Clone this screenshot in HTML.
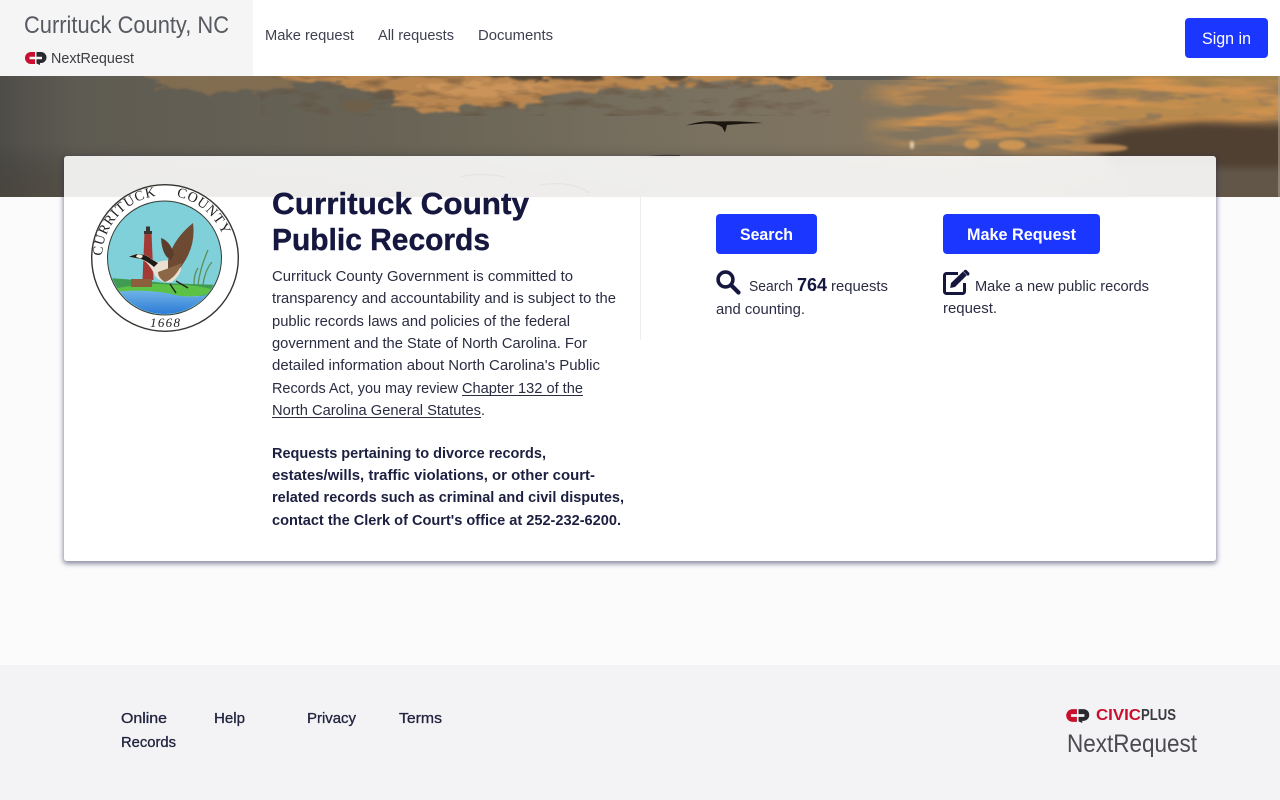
<!DOCTYPE html>
<html lang="en">
<head>
<meta charset="utf-8">
<title>Currituck County Public Records</title>
<style>
html,body{margin:0;padding:0;width:1280px;height:800px;overflow:hidden;background:#fbfbfc;font-family:"Liberation Sans",sans-serif}
.abs{position:absolute}
#brand{left:0;top:0;width:253px;height:76px;background:#f5f5f5}
#nav{left:253px;top:0;width:1027px;height:76px;background:#fff}
#hero{left:0;top:76px;width:1280px;height:121px;overflow:hidden}
#card{left:64px;top:156px;width:1152px;height:405px;border-radius:3px;background:linear-gradient(to bottom,rgba(255,255,255,.89) 0,rgba(255,255,255,.89) 41px,#fff 41px);box-shadow:0 2px 5px 1px rgba(40,40,80,.5)}
#divider{left:640px;top:197px;width:1px;height:143px;background:#eeeeef}
.btn{background:#1b36ff;border-radius:4px}
#footer{left:0;top:665px;width:1280px;height:135px;background:#f3f3f6}
svg{display:block}
#t{left:0;top:0;pointer-events:none}
#t text{font-family:"Liberation Sans",sans-serif;fill:#25273f}
#t .b{font-size:14.4px;fill:#2a2c42}
#t .s{font-size:14.4px;font-weight:bold;fill:#1d1f40}
#t .h{font-size:31px;font-weight:bold;fill:#15173f;stroke:#15173f;stroke-width:.4px}
#t .n{font-size:14.4px;fill:#3f4150}
#t .f{font-size:14.4px;fill:#22243f;stroke:#22243f;stroke-width:.3px}
#t .w{fill:#fff;font-size:16.5px}
</style>
</head>
<body>
<div class="abs" id="brand"></div>
<div class="abs" id="nav"></div>
<div class="abs" id="hero">
<svg width="1280" height="121" viewBox="0 76 1280 121">
<defs>
<linearGradient id="sky" x1="0" x2="1" y1="0" y2="0">
<stop offset="0" stop-color="#4f4d48"/><stop offset=".06" stop-color="#5e5b52"/><stop offset=".3" stop-color="#686355"/><stop offset=".55" stop-color="#7a7160"/><stop offset=".75" stop-color="#84765f"/><stop offset="1" stop-color="#6d5f4c"/>
</linearGradient>
<linearGradient id="fadeB" x1="0" x2="0" y1="0" y2="1"><stop offset=".55" stop-color="#000" stop-opacity="0"/><stop offset="1" stop-color="#3a3024" stop-opacity=".25"/></linearGradient>
<filter id="rough" x="-5%" y="-30%" width="110%" height="160%" color-interpolation-filters="sRGB">
<feTurbulence type="fractalNoise" baseFrequency=".035 .12" numOctaves="3" seed="4" result="n"/>
<feDisplacementMap in="SourceGraphic" in2="n" scale="22" xChannelSelector="R" yChannelSelector="G"/>
<feGaussianBlur stdDeviation="1.100"/>
</filter>
<filter id="b4" x="-20%" y="-80%" width="140%" height="260%"><feGaussianBlur stdDeviation="4"/></filter>
<filter id="b1" x="-20%" y="-50%" width="140%" height="200%"><feGaussianBlur stdDeviation="1.200"/></filter>
<filter id="mott" x="0" y="0" width="100%" height="100%" color-interpolation-filters="sRGB">
<feTurbulence type="fractalNoise" baseFrequency=".011 .085" numOctaves="4" seed="7"/>
<feColorMatrix type="matrix" values="0 0 0 0 .83  0 0 0 0 .58  0 0 0 0 .31  3.4 0 0 0 -1.35"/>
<feGaussianBlur stdDeviation=".7"/>
<feComposite in2="SourceAlpha" operator="in"/>
</filter>
<filter id="mottD" x="0" y="0" width="100%" height="100%" color-interpolation-filters="sRGB">
<feTurbulence type="fractalNoise" baseFrequency=".03 .1" numOctaves="3" seed="12"/>
<feColorMatrix type="matrix" values="0 0 0 0 .38  0 0 0 0 .3  0 0 0 0 .22  3 0 0 0 -1.5"/>
<feComposite in2="SourceAlpha" operator="in"/>
</filter>
<linearGradient id="mfade" x1="0" x2="1"><stop offset="0" stop-color="#fff" stop-opacity="0"/><stop offset=".14" stop-color="#fff"/></linearGradient>
<linearGradient id="mv" x1="0" x2="0" y1="0" y2="1"><stop offset=".6" stop-color="#fff"/><stop offset="1" stop-color="#000"/></linearGradient>
<mask id="mm" maskUnits="userSpaceOnUse" x="860" y="76" width="420" height="90"><rect x="860" y="76" width="420" height="90" fill="url(#mfade)"/></mask>
<mask id="mv2" maskUnits="userSpaceOnUse" x="860" y="76" width="420" height="90"><rect x="860" y="76" width="420" height="90" fill="url(#mv)"/></mask>
</defs>
<rect x="0" y="76" width="1280" height="121" fill="url(#sky)"/>
<rect x="0" y="76" width="1280" height="121" fill="url(#fadeB)"/>
<g filter="url(#rough)">
<path d="M135 70H290L300 82 262 90 210 94 150 86Z" fill="#8a7150" opacity=".8"/>
<path d="M270 70H640V84L600 90 560 94 520 104 470 108 420 112 390 96 340 84 285 78Z" fill="#b98650"/>
<path d="M640 70H825L830 90 790 86 740 80 690 82 640 90Z" fill="#bb8850"/>
<path d="M440 70H640V79H500ZM660 70H700L690 79H670ZM760 70H800L790 79H770Z" fill="#554838"/>
<path d="M420 84H560L540 92 470 98Z" fill="#c9935a"/>
</g>
<rect x="260" y="76" width="570" height="40" filter="url(#mottD)" fill="#000" opacity=".55"/>
<ellipse cx="357" cy="106" rx="16" ry="6" fill="#6e5f48" filter="url(#b1)"/>
<rect x="826" y="76" width="100" height="4" fill="#5c5a55"/>
<g filter="url(#rough)">
<path d="M855 96L960 88 1040 70H1285V150L1180 143 1090 150 1000 136 930 122 980 110 900 98Z" fill="#967a57"/>
<path d="M1000 70H1285V84L1100 90 1000 82Z" fill="#a3824f"/>
<path d="M970 118L1060 106 1200 98 1285 102V114L1150 120 1040 126Z" fill="#b88a4e"/>
</g>
<g mask="url(#mv2)"><g mask="url(#mm)"><rect x="860" y="76" width="420" height="90" filter="url(#mott)" fill="#000"/></g></g>
<g filter="url(#b4)">
<path d="M1085 140L1130 128 1200 122 1285 124V170L1200 172 1120 170Z" fill="#4f3f30"/>
<path d="M1110 168H1285V197H1120Z" fill="#625648"/>
</g>
<g filter="url(#b1)">
<ellipse cx="972" cy="144" rx="8" ry="5" fill="#cc9552"/>
<ellipse cx="1012" cy="145" rx="14" ry="5" fill="#cc9552"/>
<ellipse cx="1100" cy="148" rx="28" ry="4" fill="#b78550"/>
<ellipse cx="912" cy="145" rx="2" ry="4" fill="#e8d6b0"/>
</g>
<path d="M686 125.500Q702 120 718 121.500Q740 120.500 763 123Q742 123.500 727 125L725 132.500L722 127Q716 123 705 123.500Q695 124 686 125.500Z" fill="#1c1610"/>
<path d="M640 157Q660 154 680 155L680 158H640Z" fill="#2d2620" opacity=".7"/>
<rect x="1278" y="76" width="2" height="121" fill="#b5a999" opacity=".5"/>
</svg>
</div>
<div class="abs" id="card"></div>
<svg class="abs" style="left:450px;top:165px" width="200" height="32" viewBox="0 0 200 32"><path d="M10 12Q30 7 55 12M90 20Q120 15 140 28" fill="none" stroke="#e6e4e0" stroke-width="1.200"/></svg>
<div class="abs" id="divider"></div>
<div class="abs btn" style="left:1185px;top:18px;width:83px;height:40px"></div>
<div class="abs btn" style="left:716px;top:214px;width:101px;height:40px"></div>
<div class="abs btn" style="left:943px;top:214px;width:157px;height:40px"></div>
<div class="abs" id="footer"></div>

<!-- Seal -->
<svg class="abs" style="left:85px;top:178px" width="160" height="160" viewBox="85 178 160 160">
<defs>
<clipPath id="disc"><circle cx="164.500" cy="258" r="56"/></clipPath>
<path id="arcT" d="M102 258A62.500 62.500 0 0 1 227 258"/>
<linearGradient id="wat" x1="0" x2="0" y1="0" y2="1"><stop offset="0" stop-color="#6fb4e6"/><stop offset="1" stop-color="#2a78d6"/></linearGradient>
</defs>
<circle cx="165" cy="258" r="73.300" fill="#fff" stroke="#33332f" stroke-width="1.400"/>
<circle cx="164.500" cy="258" r="57" fill="#7ed0d8" stroke="#3a3a36" stroke-width="1"/>
<g clip-path="url(#disc)">
<rect x="108" y="200" width="114" height="116" fill="#7fd0d8"/>
<path d="M108 278Q140 280 165 283L222 285V296H108Z" fill="#3f9c52"/>
<path d="M118 288Q150 282 172 285 195 284 214 290 205 298 180 296 150 296 118 295Z" fill="#5cc245"/>
<path d="M112 292Q150 288 180 296 200 298 212 293 196 312 165 315 128 314 112 292Z" fill="url(#wat)"/>
<path d="M144.500 232L151.500 232 153.500 280H142.500Z" fill="#a43a36"/>
<path d="M144 231H152V234H144ZM146 226.500H150V231H146Z" fill="#3a3530"/>
<path d="M131 279H152V287H131Z" fill="#8c5f3c"/>
<path d="M198 285Q200 268 208 250M203 285Q205 270 212 262M194 284Q194 274 198 268" stroke="#5d8e5a" stroke-width="1.300" fill="none"/>
</g>
<path d="M129 256L137 254Q146 254 150 258 154 261 158 262 170 258 180 264 184 272 172 282 162 284 155 276 152 268 146 262 139 258 135 258Z" fill="#e9e0d2"/>
<path d="M129 256.500L137 254Q146 254 151 259L158 263 154 267Q146 260 139 258.500 135 258 129 256.500Z" fill="#1f1a16"/>
<path d="M137 254.500Q141 254 143 256L141 258.500 136 257Z" fill="#efe9dd"/>
<path d="M168 261Q172 240 193 223 196 245 183 264 177 274 168 270Z" fill="#6e4a33"/>
<path d="M171 260Q162 256 161 238 170 241 174 254Z" fill="#5b3d2b"/>
<path d="M158 272Q175 266 182 263 176 278 165 282 158 278 158 272Z" fill="#8b6747"/>
<path d="M176 281L188 288M170 284L176 293" stroke="#26231f" stroke-width="1.400" fill="none"/>
<text font-family="Liberation Serif,serif" font-size="14" fill="#222" letter-spacing=".8"><textPath href="#arcT" startOffset="2">CURRITUCK</textPath></text>
<text font-family="Liberation Serif,serif" font-size="14" fill="#222" letter-spacing=".8"><textPath href="#arcT" startOffset="110">COUNTY</textPath></text>
<text x="150" y="327" font-family="Liberation Serif,serif" font-size="13" font-style="italic" fill="#222" textLength="30">1668</text>
</svg>

<!-- Icons and logos -->
<svg class="abs" style="left:25px;top:51px" width="22" height="14" viewBox="0 0 22 14">
<path d="M10 1H6A6 6 0 0 0 6 13H10V8.300H4.500V5.700H10Z" fill="#c8102e"/>
<path d="M11.500 1H16A5.500 5.500 0 0 1 16 12H15V14L11.500 12.500V8.300H17V5.700H11.500Z" fill="#2a2a2e"/>
</svg>
<svg class="abs" style="left:1066px;top:708px" width="24" height="15" viewBox="0 0 22 14">
<path d="M10 1H6A6 6 0 0 0 6 13H10V8.300H4.500V5.700H10Z" fill="#c8102e"/>
<path d="M11.500 1H16A5.500 5.500 0 0 1 16 12H15V14L11.500 12.500V8.300H17V5.700H11.500Z" fill="#2a2a2e"/>
</svg>
<svg class="abs" style="left:716px;top:270px" width="25" height="25" viewBox="0 0 25 25">
<circle cx="9.500" cy="9.500" r="7.400" fill="none" stroke="#15173f" stroke-width="3.600"/>
<path d="M15 15L22.500 22.500" stroke="#15173f" stroke-width="4.200" stroke-linecap="round"/>
</svg>
<svg class="abs" style="left:943px;top:269px" width="28" height="26" viewBox="0 0 28 26">
<path d="M15 4.500H3.500A2 2 0 0 0 1.500 6.500V22.500A2 2 0 0 0 3.500 24.500H19.500A2 2 0 0 0 21.500 22.500V14" fill="none" stroke="#15173f" stroke-width="3"/>
<path d="M8 14L20 2.500 23.800 6.300 12 18 7.200 19Z" fill="#15173f"/>
<path d="M21.300 1.300Q22.500 .3 23.700 1.300L26 3.600Q27 4.800 26 6L25 7 20.300 2.300Z" fill="#15173f"/>
</svg>

<!-- Text -->
<svg class="abs" id="t" width="1280" height="800" viewBox="0 0 1280 800">
<text x="24" y="33" font-size="24" style="fill:#585a62" textLength="205" lengthAdjust="spacingAndGlyphs">Currituck County, NC</text>
<text x="51" y="63" font-size="15" style="fill:#3c3d43" textLength="83" lengthAdjust="spacingAndGlyphs">NextRequest</text>
<text class="n" x="265" y="40" textLength="89" lengthAdjust="spacingAndGlyphs">Make request</text>
<text class="n" x="378" y="40" textLength="76" lengthAdjust="spacingAndGlyphs">All requests</text>
<text class="n" x="478" y="40" textLength="75" lengthAdjust="spacingAndGlyphs">Documents</text>
<text class="w" x="1202" y="44" textLength="49" lengthAdjust="spacingAndGlyphs">Sign in</text>

<text class="h" x="272" y="214" textLength="257" lengthAdjust="spacingAndGlyphs">Currituck County</text>
<text class="h" x="272" y="250" textLength="218" lengthAdjust="spacingAndGlyphs">Public Records</text>

<text class="b" x="272" y="281" textLength="301" lengthAdjust="spacingAndGlyphs">Currituck County Government is committed to</text>
<text class="b" x="272" y="303" textLength="344" lengthAdjust="spacingAndGlyphs">transparency and accountability and is subject to the</text>
<text class="b" x="272" y="326" textLength="298" lengthAdjust="spacingAndGlyphs">public records laws and policies of the federal</text>
<text class="b" x="272" y="348" textLength="315" lengthAdjust="spacingAndGlyphs">government and the State of North Carolina. For</text>
<text class="b" x="272" y="370" textLength="328" lengthAdjust="spacingAndGlyphs">detailed information about North Carolina's Public</text>
<text class="b" x="272" y="393" textLength="186" lengthAdjust="spacingAndGlyphs">Records Act, you may review</text>
<text class="b" x="462" y="393" textLength="121" lengthAdjust="spacingAndGlyphs">Chapter 132 of the</text>
<rect x="462" y="395" width="121" height="1" fill="#2a2c42"/>
<text class="b" x="272" y="415" textLength="209" lengthAdjust="spacingAndGlyphs">North Carolina General Statutes</text>
<rect x="272" y="417" width="209" height="1" fill="#2a2c42"/>
<text class="b" x="481" y="415">.</text>

<text class="s" x="272" y="458" textLength="274" lengthAdjust="spacingAndGlyphs">Requests pertaining to divorce records,</text>
<text class="s" x="272" y="480" textLength="323" lengthAdjust="spacingAndGlyphs">estates/wills, traffic violations, or other court-</text>
<text class="s" x="272" y="502" textLength="352" lengthAdjust="spacingAndGlyphs">related records such as criminal and civil disputes,</text>
<text class="s" x="272" y="525" textLength="349" lengthAdjust="spacingAndGlyphs">contact the Clerk of Court's office at 252-232-6200.</text>

<text class="w" x="740" y="240" font-weight="bold" textLength="53" lengthAdjust="spacingAndGlyphs">Search</text>
<text class="w" x="967" y="240" font-weight="bold" textLength="109" lengthAdjust="spacingAndGlyphs">Make Request</text>

<text class="b" x="749" y="291" textLength="44" lengthAdjust="spacingAndGlyphs">Search</text>
<text x="797" y="291" font-size="18" font-weight="bold" style="fill:#15173f" textLength="30" lengthAdjust="spacingAndGlyphs">764</text>
<text class="b" x="831" y="291" textLength="57" lengthAdjust="spacingAndGlyphs">requests</text>
<text class="b" x="716" y="314" textLength="89" lengthAdjust="spacingAndGlyphs">and counting.</text>
<text class="b" x="975" y="291" textLength="174" lengthAdjust="spacingAndGlyphs">Make a new public records</text>
<text class="b" x="943" y="313" textLength="54" lengthAdjust="spacingAndGlyphs">request.</text>

<text class="f" x="121" y="723" textLength="46" lengthAdjust="spacingAndGlyphs">Online</text>
<text class="f" x="121" y="747" textLength="55" lengthAdjust="spacingAndGlyphs">Records</text>
<text class="f" x="214" y="723" textLength="31" lengthAdjust="spacingAndGlyphs">Help</text>
<text class="f" x="307" y="723" textLength="49" lengthAdjust="spacingAndGlyphs">Privacy</text>
<text class="f" x="399" y="723" textLength="43" lengthAdjust="spacingAndGlyphs">Terms</text>

<text x="1096" y="720" font-size="15.500" font-weight="bold" style="fill:#c8102e" textLength="45" lengthAdjust="spacingAndGlyphs">CIVIC</text>
<text x="1141" y="720" font-size="15.500" font-weight="bold" style="fill:#3a3b40" textLength="35" lengthAdjust="spacingAndGlyphs">PLUS</text>
<text x="1067" y="752" font-size="25" style="fill:#4a4b50" textLength="130" lengthAdjust="spacingAndGlyphs">NextRequest</text>
</svg>
</body>
</html>
